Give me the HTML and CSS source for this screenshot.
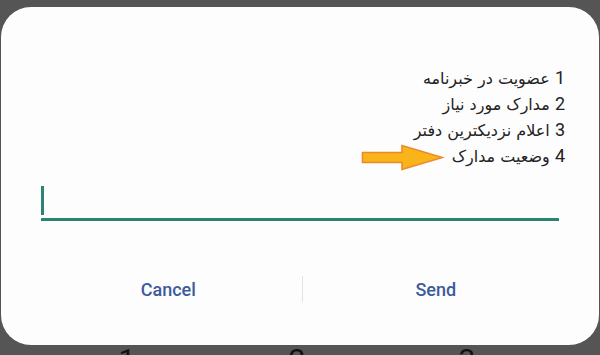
FILE: index.html
```html
<!DOCTYPE html>
<html lang="fa">
<head>
    <meta charset="UTF-8">
    <meta name="viewport" content="width=device-width, initial-scale=1.0">
    <title>Send message</title>
    <link rel="stylesheet" href="styles.css">
</head>
<body>

<div class="dialog">
    <div class="message" dir="rtl">
        <p><span class="num">1</span> عضویت در خبرنامه</p>
        <p><span class="num">2</span> مدارک مورد نیاز</p>
        <p><span class="num">3</span> اعلام نزدیکترین دفتر</p>
        <p><span class="num">4</span> وضعیت مدارک</p>
    </div>

    <!-- arrow pointing at option 4 -->
    <svg class="pointer" width="84" height="28" viewBox="0 0 84 28">
        <polygon points="1.5,8.5 41,8.5 41,1.5 81.5,13.5 41,25.5 41,18.5 1.5,18.5"
                 fill="#f9b419" stroke="#ec8a2a" stroke-width="1.6" stroke-linejoin="miter"/>
    </svg>

    <div class="field">
        <span class="caret"></span>
    </div>

    <div class="actions">
        <button class="action">Cancel</button>
        <span class="divider"></span>
        <button class="action">Send</button>
    </div>
</div>

<div class="keypad">
    <span>1</span>
    <span>2</span>
    <span>3</span>
</div>

</body>
</html>
```

FILE: styles.css
```css
html, body {
    margin: 0;
    padding: 0;
}
body {
    width: 600px;
    height: 355px;
    overflow: hidden;
    background-color: #555555;
    font-family: 'Roboto', 'DejaVu Sans', sans-serif;
}
.dialog {
    position: relative;
    margin: 7px 1px 0 1px;
    height: 338px;
    background-color: #fdfdfd;
    border-radius: 30px;
    box-sizing: border-box;
    padding-top: 58px;
}
.message {
    padding-right: 34px;
    text-align: right;
    color: #222;
    font-family: 'DejaVu Sans', sans-serif;
    font-size: 16px;
}
.message p {
    margin: 0;
    line-height: 26px;
    height: 26px;
}
.message .num {
    font-family: 'Roboto', sans-serif;
    font-size: 18px;
}
.pointer {
    position: absolute;
    left: 360px;
    top: 137px;
}
.field {
    margin: 14px 40px 0 40px;
    height: 38px;
    border-bottom: 3px solid #2a8373;
    display: flex;
    align-items: flex-end;
    padding-bottom: 3px;
    box-sizing: border-box;
}
.caret {
    width: 3px;
    height: 29px;
    background-color: #2a8373;
}
.actions {
    display: flex;
    align-items: center;
    margin-top: 54px;
    padding: 0 30px 0 34px;
    height: 28px;
}
.action {
    flex: 1;
    background: none;
    border: none;
    padding: 0;
    font-family: 'Roboto', sans-serif;
    font-weight: 500;
    font-size: 18px;
    color: #3c5b9c;
    cursor: pointer;
}
.divider {
    width: 1px;
    height: 26px;
    background-color: #e2e2e2;
}
.keypad {
    display: grid;
    grid-template-columns: repeat(3, 170px);
    justify-content: center;
    margin-left: -6px;
    font-size: 30px;
    line-height: 30px;
    color: #111;
    text-align: center;
}
```
